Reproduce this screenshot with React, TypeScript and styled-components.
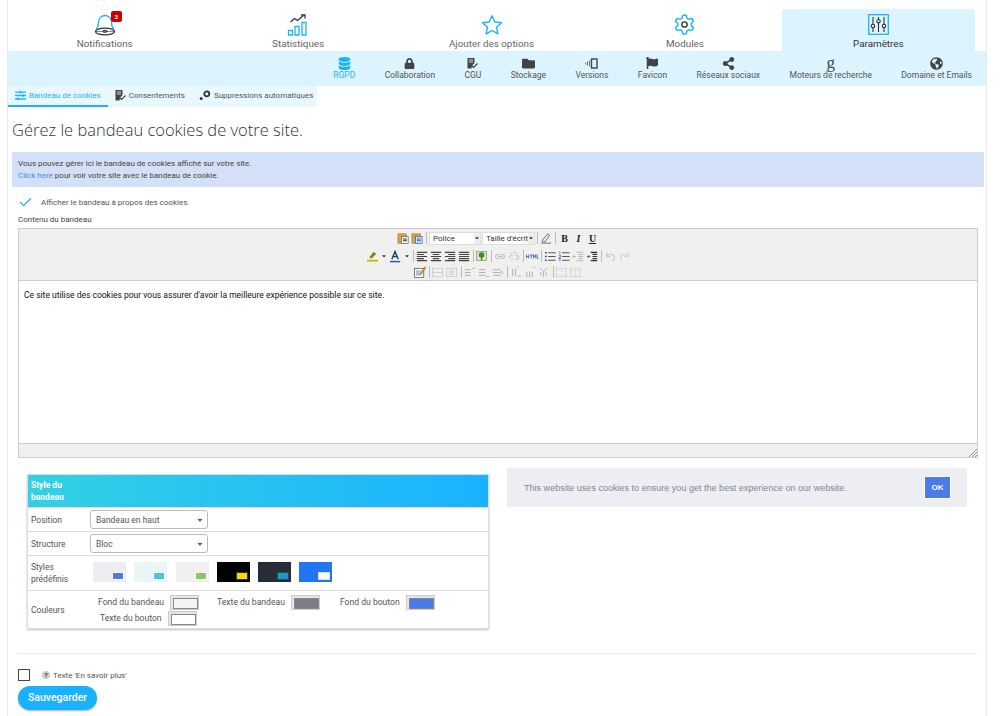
import { FC, ReactNode } from "react";
import styled, { createGlobalStyle } from "styled-components";
import {
	FaDatabase,
	FaLock,
	FaFolder,
	FaFlag,
	FaShareAlt,
	FaGlobeAmericas,
	FaSlidersH,
	FaCaretDown,
	FaQuestion,
} from "react-icons/fa";
import { Check } from "lucide-react";

const BLUE = "#1ab2ff";
const PALE = "#dbf4ff";
const DARK = "#333";

const GlobalStyle = createGlobalStyle`
	html, body {
		margin: 0;
		padding: 0;
		background: #fff;
		font-family: Roboto, "Liberation Sans", sans-serif;
		color: #555;
	}
	* { box-sizing: border-box; }
`;

const GoogleG = styled.span`
	font-family: "Liberation Serif", serif;
	font-size: 17px;
	line-height: 12px;
	color: #444;
`;

/* big nav icons */
const BellIcon = () => (
	<svg width="24" height="24" viewBox="0 0 24 24" fill="none">
		<path d="M3 16c2-1.500 2.500-3 2.500-7a6.500 6.500 0 0 1 13 0c0 4 .5 5.500 2.500 7" stroke={BLUE} strokeWidth="1.3" />
		<ellipse cx="12" cy="18.500" rx="9.500" ry="3.300" stroke={DARK} strokeWidth="1.300" />
		<ellipse cx="12" cy="18.300" rx="2.500" ry="1" stroke={DARK} strokeWidth="1" />
		<path d="M3 18.500h18" stroke={DARK} strokeWidth=".6" />
	</svg>
);

const StatsIcon = () => (
	<svg width="22" height="24" viewBox="0 0 22 24" fill="none">
		<path d="M3.500 9l4-3.500 3 2 6-5" stroke={DARK} strokeWidth="1.300" />
		<path d="M14 2h4v3.500" stroke={DARK} strokeWidth="1.300" />
		<path d="M1.500 17.500h4v4.500h-4zM8 13.500h4v8.500H8zM15 9.500h4V22h-4z" stroke={BLUE} strokeWidth="1.300" />
	</svg>
);

const StarIcon = () => (
	<svg width="22" height="22" viewBox="0 0 22 22" fill="none">
		<path d="M11 1.800l2.800 6.200 6.700.7-5 4.500 1.400 6.700L11 16.500l-5.900 3.400 1.400-6.700-5-4.500 6.700-.7z" stroke={BLUE} strokeWidth="1.400" strokeLinejoin="round" />
	</svg>
);

const GearIcon = () => (
	<svg width="23" height="23" viewBox="0 0 24 24" fill="none">
		<path
			d="M12.220 2h-.44a2 2 0 0 0-2 2v.18a2 2 0 0 1-1 1.730l-.43.250a2 2 0 0 1-2 0l-.15-.080a2 2 0 0 0-2.730.730l-.22.380a2 2 0 0 0 .730 2.730l.15.100a2 2 0 0 1 1 1.720v.510a2 2 0 0 1-1 1.740l-.15.090a2 2 0 0 0-.730 2.730l.22.380a2 2 0 0 0 2.730.730l.15-.080a2 2 0 0 1 2 0l.43.250a2 2 0 0 1 1 1.730V20a2 2 0 0 0 2 2h.44a2 2 0 0 0 2-2v-.18a2 2 0 0 1 1-1.730l.43-.250a2 2 0 0 1 2 0l.15.080a2 2 0 0 0 2.730-.730l.22-.390a2 2 0 0 0-.730-2.730l-.15-.080a2 2 0 0 1-1-1.740v-.500a2 2 0 0 1 1-1.740l.15-.090a2 2 0 0 0 .730-2.730l-.22-.380a2 2 0 0 0-2.730-.730l-.15.080a2 2 0 0 1-2 0l-.43-.250a2 2 0 0 1-1-1.730V4a2 2 0 0 0-2-2z"
			stroke={BLUE}
			strokeWidth="1.500"
		/>
		<circle cx="12" cy="12" r="2.800" stroke={DARK} strokeWidth="1.400" />
	</svg>
);

const ParamsIcon = () => (
	<svg width="21" height="21" viewBox="0 0 21 21" fill="none">
		<rect x=".7" y=".7" width="19.600" height="19.600" stroke={BLUE} strokeWidth="1.300" />
		<g stroke={DARK} strokeWidth="1.100">
			<path d="M5 3v7.500M5 14v4M10.500 3v2.500M10.500 9v9M16 3v7.500M16 14v4" />
			<circle cx="5" cy="12" r="1.700" />
			<circle cx="10.500" cy="7.200" r="1.700" />
			<circle cx="16" cy="12" r="1.700" />
		</g>
	</svg>
);

/* small dark icons */
const DocCheckIcon = () => (
	<svg width="11" height="11" viewBox="0 0 11 11">
		<path d="M.5 0h7v5L5 8l-.5 2.500H.5z" fill="#444" />
		<path d="M2 2h4M2 4h4" stroke="#fff" strokeWidth=".8" />
		<path d="M5 8l1.500 1.500L10.500 5.500" stroke="#444" strokeWidth="1.200" fill="none" />
	</svg>
);

const VersionsIcon = () => (
	<svg width="13" height="11" viewBox="0 0 13 11" fill="none">
		<rect x="6.500" y="1" width="5.500" height="9" stroke="#444" strokeWidth="1.400" />
		<path d="M4.500 2.500v6M2.500 3.500v4M.7 4.500v2" stroke="#666" strokeWidth=".9" />
	</svg>
);

const GearsIcon = () => (
	<svg width="12" height="11" viewBox="0 0 12 11" fill="none">
		<circle cx="7.800" cy="3.800" r="2.500" stroke="#333" strokeWidth="1.800" />
		<circle cx="2.200" cy="8.500" r="1.500" fill="#333" />
	</svg>
);

/* editor toolbar icons */
type ToolName =
	| "paste" | "pasteWord" | "eraser" | "highlight" | "colorA" | "alignL" | "alignC" | "alignR" | "alignJ"
	| "image" | "link" | "unlink" | "html" | "ul" | "ol" | "outdent" | "indent" | "undo" | "redo"
	| "edit" | "rows" | "cell" | "tr1" | "tr2" | "tr3" | "td1" | "td2" | "td3" | "grid1" | "grid2";

const lines = (d: string, color = "#444", w = 1.1) => <path d={d} stroke={color} strokeWidth={w} fill="none" />;

const toolDrawings: Record<ToolName, ReactNode> = {
	paste: (<><rect x="1" y="2" width="9" height="10" fill="#d9a441" stroke="#8a6a2a" strokeWidth=".6" /><rect x="5" y="5" width="7" height="7.500" fill="#fff" stroke="#555" strokeWidth=".7" />{lines("M6.500 7.500h4M6.500 9.500h4", "#222")}</>),
	pasteWord: (<><rect x="1" y="2" width="9" height="10" fill="#d9a441" stroke="#8a6a2a" strokeWidth=".6" /><rect x="5" y="5" width="7" height="7.500" fill="#cfe0f7" stroke="#2a5fb0" strokeWidth=".7" />{lines("M6.500 7.500h4M6.500 9.500h4", "#2a5fb0")}</>),
	eraser: (<>{lines("M2 9.500L8 2.500c1-.8 2.500.4 2 1.500L5.500 10.500H3zM1 12h11", "#557", .9)}</>),
	highlight: (<><path d="M4 7.500L8 2l3 2-4.500 5H4z" fill="#6b8e23" /><path d="M1 11.500h12" stroke="#d8b400" strokeWidth="2" /></>),
	colorA: (<><path d="M3 10L6.500 1.500 10 10M4.500 7h4" stroke="#1f3a6e" strokeWidth="1.400" fill="none" /><path d="M1 12.500h11" stroke="#2a5fb0" strokeWidth="1.600" /></>),
	alignL: lines("M1 2.500h11M1 4.800h7.500M1 7h11M1 9.300h7.500M1 11.500h11", "#444", 1.200),
	alignC: lines("M1 2.500h11M3 4.800h7M1 7h11M3 9.300h7M1 11.500h11", "#444", 1.200),
	alignR: lines("M1 2.500h11M4.500 4.800h7.500M1 7h11M4.500 9.300h7.500M1 11.500h11", "#444", 1.200),
	alignJ: lines("M1 2.500h11M1 4.800h11M1 7h11M1 9.300h11M1 11.500h11", "#444", 1.200),
	image: (<><rect x=".5" y="1.500" width="11" height="10" fill="#d5e8c0" stroke="#777" strokeWidth=".6" /><circle cx="6" cy="5.500" r="3" fill="#3d8a2e" /><rect x="5.300" y="7.500" width="1.400" height="3.500" fill="#8a5a2a" /></>),
	link: lines("M1.500 7a2 2 0 0 1 2-2h2.500M6 9H3.500a2 2 0 0 1-2-2M7 5h2.500a2 2 0 0 1 0 4H7M4.500 7h5", "#7a8a9a", 1),
	unlink: lines("M1.500 8a2 2 0 0 1 2-2h1.500M5 10H3.500M8 6h1.500a2 2 0 0 1 0 4H8M6.500 2v2M3 3l1.500 1.500M10 3L8.500 4.500", "#7a8a9a", 1),
	html: (<path d="M.5 5v4M.5 7h2.500M3 5v4M4.500 5.300h2.500M5.700 5.300V9M8 9V5l1.300 2.500L10.500 5v4M12 5v4h1.500" stroke="#2a5fb0" strokeWidth=".9" fill="none" />),
	ul: (<>{lines("M4.500 3h8M4.500 7h8M4.500 11h8", "#555", 1.200)}{lines("M1 3h2M1 7h2M1 11h2", "#2a5fb0", 1.600)}</>),
	ol: (<>{lines("M4.500 3h8M4.500 7h8M4.500 11h8", "#555", 1.200)}{lines("M2 1.500v3M1 6h2v2H1v1.500h2M1 11h2", "#2a5fb0", .8)}</>),
	outdent: (<>{lines("M5 2.500h7M7 4.800h5M7 7h5M7 9.300h5M5 11.500h7", "#8a8a8a", 1.100)}{lines("M4 7H1M2.500 5.500L1 7l1.500 1.500", "#6a8ab0", 1)}</>),
	indent: (<>{lines("M5 2.500h7M7 4.800h5M7 7h5M7 9.300h5M5 11.500h7", "#333", 1.300)}{lines("M1 7h3M2.500 5.500L4 7l-1.500 1.500", "#2a5fb0", 1)}</>),
	undo: lines("M3 3v4h4M3 7c2-3 6-3.500 8 0 .8 1.800 0 3.500-1.500 4.500", "#8aa8d0", 1.200),
	redo: lines("M11 3v4H7M11 7C9 4 5 3.500 3 7c-.8 1.800 0 3.500 1.500 4.500", "#a8bcd8", 1.200),
	edit: (<><rect x=".5" y="2.500" width="10" height="10" fill="#fff" stroke="#555" strokeWidth=".8" />{lines("M2 5.500h5M2 7.500h4M2 9.500h5", "#2a5fb0", .8)}<path d="M6 8.500L11.500 1 13 2 7.500 9.500z" fill="#d99a2a" stroke="#6a4a1a" strokeWidth=".4" /></>),
	rows: (<><rect x=".5" y="2.500" width="11" height="9" fill="#eef2f7" stroke="#9aa" strokeWidth=".8" />{lines("M.5 7h11", "#9aa", .8)}</>),
	cell: (<><rect x=".5" y="2.500" width="11" height="9" fill="#eef2f7" stroke="#9aa" strokeWidth=".8" /><rect x="4" y="5" width="4" height="4" fill="#cfd8e8" stroke="#9aa" strokeWidth=".5" /></>),
	tr1: lines("M1 4h6M1 7h6M1 10h6M9 2.500h3", "#aab", 1),
	tr2: lines("M1 4h7M1 7h7M1 10h7M9 11.500h3", "#aab", 1),
	tr3: (<>{lines("M1 4h8M1 7h8M1 10h8", "#aab", 1)}{lines("M9 5l3 2-3 2", "#d9a0a0", 1)}</>),
	td1: lines("M3 3v8M6 3v8M9 11h3M7 1h2", "#aab", 1),
	td2: lines("M3 6v6M6 6v6M9 6v6M10 1.500h2", "#aab", 1),
	td3: lines("M2 2l4 4M10 2L6 6M6 6v6M3 7v3M9 7v3", "#aab", 1),
	grid1: (<><rect x=".5" y="2.500" width="11" height="9" fill="#dfe6ef" stroke="#aab" strokeWidth=".7" />{lines("M4 2.500v9M8 2.500v9M.5 7h11", "#fff", .8)}</>),
	grid2: (<><rect x=".5" y="2.500" width="11" height="9" fill="#eef2f7" stroke="#aab" strokeWidth=".7" />{lines("M.5 5h11M6 5v6.500", "#bcc", .8)}</>),
};

const ToolIcon: FC<{ name: ToolName; faded?: boolean }> = ({ name, faded }) => (
	<ToolSvg viewBox="0 0 14 14" $faded={faded}>{toolDrawings[name]}</ToolSvg>
);

const topTabs = [
	{ label: "Notifications", icon: <BellIcon />, badge: "3" },
	{ label: "Statistiques", icon: <StatsIcon /> },
	{ label: "Ajouter des options", icon: <StarIcon /> },
	{ label: "Modules", icon: <GearIcon /> },
	{ label: "Paramètres", icon: <ParamsIcon />, active: true },
];

const subTabs: { label: string; icon: ReactNode; active?: boolean }[] = [
	{ label: "RGPD", icon: <FaDatabase size={13} color={BLUE} />, active: true },
	{ label: "Collaboration", icon: <FaLock size={11} color="#444" /> },
	{ label: "CGU", icon: <DocCheckIcon /> },
	{ label: "Stockage", icon: <FaFolder size={13} color="#444" /> },
	{ label: "Versions", icon: <VersionsIcon /> },
	{ label: "Favicon", icon: <FaFlag size={12} color="#444" /> },
	{ label: "Réseaux sociaux", icon: <FaShareAlt size={13} color="#444" /> },
	{ label: "Moteurs de recherche", icon: <GoogleG>g</GoogleG> },
	{ label: "Domaine et Emails", icon: <FaGlobeAmericas size={13} color="#444" /> },
];

const presets = [
	{ bg: "#edeef4", btn: "#4a7ce8", edge: "#fff" },
	{ bg: "#e8f6f6", btn: "#4fc6d8", edge: "#fff" },
	{ bg: "#f0f0f0", btn: "#8cc660", edge: "#fff" },
	{ bg: "#000", btn: "#f5d800", edge: "#333" },
	{ bg: "#252d38", btn: "#149cc8", edge: "#3a4450" },
	{ bg: "#2176f5", btn: "#fff", edge: "#cfe0ff" },
];

const App: FC = () => (
	<>
		<GlobalStyle />
		<Page>
			<TopNav>
				{topTabs.map((t) => (
					<TopTab key={t.label} $active={t.active}>
						<TopIcon>
							{t.icon}
							{t.badge && <Badge>{t.badge}</Badge>}
						</TopIcon>
						{t.label}
					</TopTab>
				))}
			</TopNav>

			<SubNav>
				{subTabs.map((t) => (
					<SubTab key={t.label} $active={t.active}>
						<SubIcon>{t.icon}</SubIcon>
						{t.label}
					</SubTab>
				))}
			</SubNav>

			<ThirdNav>
				<ThirdTab $active>
					<FaSlidersH size={11} color={BLUE} />
					Bandeau de cookies
				</ThirdTab>
				<ThirdTab>
					<DocCheckIcon />
					Consentements
				</ThirdTab>
				<ThirdTab>
					<GearsIcon />
					Suppressions automatiques
				</ThirdTab>
			</ThirdNav>

			<Title>Gérez le bandeau cookies de votre site.</Title>

			<InfoBox>
				Vous pouvez gérer ici le bandeau de cookies affiché sur votre site.
				<br />
				<InfoLink>Click here</InfoLink> pour voir votre site avec le bandeau de cookie.
			</InfoBox>

			<Content>
				<CheckRow>
					<Check size={15} color={BLUE} strokeWidth={2} />
					Afficher le bandeau à propos des cookies.
				</CheckRow>
				<FieldLabel>Contenu du bandeau</FieldLabel>

				<Editor>
					<Toolbar>
						<ToolRow>
							<ToolIcon name="paste" />
							<ToolIcon name="pasteWord" />
							<ToolSep />
							<ToolSelect $width={52}>Police<SelectArrow><FaCaretDown size={6} /></SelectArrow></ToolSelect>
							<ToolSelect $width={53}>Taille d'écritu<SelectArrow><FaCaretDown size={6} /></SelectArrow></ToolSelect>
							<ToolSep />
							<ToolIcon name="eraser" />
							<ToolSep />
							<FormatLetter>B</FormatLetter>
							<FormatLetter $italic>I</FormatLetter>
							<FormatLetter $underline>U</FormatLetter>
						</ToolRow>
						<ToolRow>
							<ToolIcon name="highlight" />
							<MiniArrow><FaCaretDown size={6} /></MiniArrow>
							<ToolIcon name="colorA" />
							<MiniArrow><FaCaretDown size={6} /></MiniArrow>
							<ToolSep />
							<ToolIcon name="alignL" />
							<ToolIcon name="alignC" />
							<ToolIcon name="alignR" />
							<ToolIcon name="alignJ" />
							<ToolSep />
							<ToolIcon name="image" />
							<ToolSep />
							<ToolIcon name="link" faded />
							<ToolIcon name="unlink" faded />
							<ToolSep />
							<ToolIcon name="html" />
							<ToolSep />
							<ToolIcon name="ul" />
							<ToolIcon name="ol" />
							<ToolIcon name="outdent" faded />
							<ToolIcon name="indent" />
							<ToolSep />
							<ToolIcon name="undo" faded />
							<ToolIcon name="redo" faded />
						</ToolRow>
						<ToolRow>
							<ToolIcon name="edit" />
							<ToolSep />
							<ToolIcon name="rows" faded />
							<ToolIcon name="cell" faded />
							<ToolSep />
							<ToolIcon name="tr1" />
							<ToolIcon name="tr2" />
							<ToolIcon name="tr3" />
							<ToolSep />
							<ToolIcon name="td1" />
							<ToolIcon name="td2" />
							<ToolIcon name="td3" />
							<ToolSep />
							<ToolIcon name="grid1" faded />
							<ToolIcon name="grid2" faded />
						</ToolRow>
					</Toolbar>
					<EditorBody>
						Ce site utilise des cookies pour vous assurer d'avoir la meilleure expérience possible sur ce site.
					</EditorBody>
					<EditorFooter>
						<Resize width="9" height="9" viewBox="0 0 9 9">
							<path d="M1 9l8-8M4 9l5-5M7 9l2-2" stroke="#777" strokeWidth=".8" />
						</Resize>
					</EditorFooter>
				</Editor>

				<StyleSection>
					<StylePanel>
						<PanelHead>Style du<br />bandeau</PanelHead>
						<PanelRow $height={24}>
							<RowLabel>Position</RowLabel>
							<FakeSelect>Bandeau en haut<FaCaretDown size={8} /></FakeSelect>
						</PanelRow>
						<PanelRow $height={24}>
							<RowLabel>Structure</RowLabel>
							<FakeSelect>Bloc<FaCaretDown size={8} /></FakeSelect>
						</PanelRow>
						<PanelRow $height={35}>
							<RowLabel>Styles prédéfinis</RowLabel>
							<Presets>
								{presets.map((p) => (
									<Preset key={p.bg} $bg={p.bg}>
										<PresetButton $bg={p.btn} $edge={p.edge} />
									</Preset>
								))}
							</Presets>
						</PanelRow>
						<PanelRow $height={39} $last>
							<RowLabel>Couleurs</RowLabel>
							<ColorGrid>
								<ColorItem>Fond du bandeau<Swatch $color="#f4f4f6" /></ColorItem>
								<ColorItem>Texte du bandeau<Swatch $color="#7d7d88" /></ColorItem>
								<ColorItem>Fond du bouton<Swatch $color="#4a7ce8" /></ColorItem>
								<ColorItem>Texte du bouton<Swatch $color="#fff" /></ColorItem>
							</ColorGrid>
						</PanelRow>
					</StylePanel>

					<CookiePreview>
						This website uses cookies to ensure you get the best experience on our website.
						<OkButton>OK</OkButton>
					</CookiePreview>
				</StyleSection>

				<Divider />

				<MoreRow>
					<EmptyBox />
					<HelpDot><FaQuestion size={4} color="#444" /></HelpDot>
					Texte 'En savoir plus'
				</MoreRow>
				<SaveButton>Sauvegarder</SaveButton>
			</Content>
		</Page>
	</>
);

const Page = styled.div`
	width: 980px;
	height: 716px;
	margin-left: 7px;
	padding-top: 9px;
	border-left: 1px solid #eaeaea;
	border-right: 1px solid #eaeaea;
	overflow: hidden;
`;

const TopNav = styled.div`
	display: flex;
	width: 967px;
	height: 42px;
`;

const TopTab = styled.div<{ $active?: boolean }>`
	flex: 1;
	display: flex;
	flex-direction: column;
	align-items: center;
	padding-top: 2px;
	border-radius: 3px 3px 0 0;
	background: ${(p) => (p.$active ? PALE : "transparent")};
	color: ${(p) => (p.$active ? "#333" : "#666")};
	font-size: 9.85px;
	line-height: 12px;
`;

const TopIcon = styled.div`
	position: relative;
	height: 27px;
	display: flex;
	align-items: center;
	justify-content: center;
`;

const Badge = styled.span`
	position: absolute;
	top: 0;
	left: 18px;
	width: 11px;
	height: 11px;
	border-radius: 2px;
	background: #cc0000;
	color: #fff;
	font-size: 6px;
	font-weight: 700;
	line-height: 11px;
	text-align: center;
`;

const SubNav = styled.div`
	display: flex;
	justify-content: flex-end;
	height: 35px;
	padding: 5px 14px 0 0;
	gap: 29.4px;
	background: ${PALE};
`;

const SubTab = styled.div<{ $active?: boolean }>`
	display: flex;
	flex-direction: column;
	align-items: center;
	color: ${(p) => (p.$active ? BLUE : "#555")};
	font-size: 8.5px;
	line-height: 11px;
`;

const SubIcon = styled.div`
	height: 14px;
	display: flex;
	align-items: center;
	justify-content: center;
`;

const ThirdNav = styled.div`
	display: flex;
	width: 309px;
	height: 21px;
	background: #e9f8ff;
`;

const ThirdTab = styled.div<{ $active?: boolean }>`
	display: flex;
	align-items: center;
	gap: 3px;
	padding: 0 7px;
	font-size: 8px;
	white-space: nowrap;
	color: ${(p) => (p.$active ? BLUE : "#555")};
	border-bottom: 2px solid ${(p) => (p.$active ? BLUE : "transparent")};
`;

const Title = styled.h1`
	margin: 13px 0 12px 4px;
	font-family: "Open Sans", sans-serif;
	font-weight: 300;
	font-size: 16.5px;
	line-height: 20px;
	color: #333;
`;

const InfoBox = styled.div`
	width: 972px;
	height: 35px;
	margin-left: 4px;
	padding: 6px 6px;
	background: #d4e0f7;
	border-radius: 2px;
	font-size: 8px;
	line-height: 11.5px;
	color: #444;
`;

const InfoLink = styled.span`
	color: #3a8ef0;
`;

const Content = styled.div`
	padding: 0 9px 0 10px;
`;

const CheckRow = styled.div`
	display: flex;
	align-items: center;
	gap: 8px;
	height: 14px;
	margin-top: 8px;
	font-size: 8px;
	color: #555;
`;

const FieldLabel = styled.div`
	margin-top: 5px;
	font-size: 8px;
	line-height: 12px;
	color: #444;
`;

const Editor = styled.div`
	width: 960px;
	height: 230px;
	margin-top: 2px;
	display: flex;
	flex-direction: column;
	border: 1px solid #ccc;
`;

const Toolbar = styled.div`
	height: 52px;
	padding-top: 1px;
	background: #f0f0ee;
	border-bottom: 1px solid #ccc;
`;

const ToolRow = styled.div`
	display: flex;
	justify-content: center;
	align-items: center;
	gap: 1px;
	height: 16px;

	&:nth-child(2) { margin-top: 2px; }
`;

const ToolSvg = styled.svg<{ $faded?: boolean }>`
	width: 13px;
	height: 13px;
	opacity: ${(p) => (p.$faded ? 0.55 : 1)};
`;

const ToolSep = styled.span`
	width: 1px;
	height: 12px;
	margin: 0 1px;
	background: #bbb;
`;

const ToolSelect = styled.div<{ $width: number }>`
	position: relative;
	width: ${(p) => p.$width}px;
	height: 13px;
	padding-left: 3px;
	background: #fff;
	border: 1px solid #ddd;
	font-size: 8px;
	line-height: 11px;
	color: #333;
	white-space: nowrap;
	overflow: hidden;
`;

const SelectArrow = styled.span`
	position: absolute;
	top: 0;
	right: 0;
	width: 6px;
	height: 11px;
	display: flex;
	align-items: center;
	justify-content: center;
	background: #eee;
`;

const MiniArrow = styled.span`
	display: flex;
	margin: 0 1px;
	color: #333;
`;

const FormatLetter = styled.span<{ $italic?: boolean; $underline?: boolean }>`
	width: 13px;
	text-align: center;
	font-family: "Liberation Serif", serif;
	font-weight: 700;
	font-size: 10px;
	color: #222;
	font-style: ${(p) => (p.$italic ? "italic" : "normal")};
	text-decoration: ${(p) => (p.$underline ? "underline" : "none")};
`;

const EditorBody = styled.div`
	flex: 1;
	padding: 8px 5px;
	background: #fff;
	font-size: 8.5px;
	line-height: 12px;
	color: #111;
`;

const EditorFooter = styled.div`
	position: relative;
	height: 14px;
	background: #f0f0ee;
	border-top: 1px solid #ccc;
`;

const Resize = styled.svg`
	position: absolute;
	right: 0;
	bottom: 0;
`;

const StyleSection = styled.div`
	display: flex;
	align-items: flex-start;
	margin-top: 10px;
`;

const StylePanel = styled.div`
	width: 462px;
	height: 155px;
	margin: 6px 18px 0 9px;
	border: 1px solid #ddd;
	box-shadow: 0 1px 2px rgba(0, 0, 0, 0.25);
`;

const PanelHead = styled.div`
	height: 32px;
	padding: 4px 3px;
	background: linear-gradient(90deg, #33d0e4, #1ab2ff);
	color: #fff;
	font-size: 8.5px;
	font-weight: 700;
	line-height: 12px;
`;

const PanelRow = styled.div<{ $height: number; $last?: boolean }>`
	display: flex;
	align-items: center;
	height: ${(p) => p.$height}px;
	border-top: 1px solid #ddd;
`;

const RowLabel = styled.div`
	width: 62px;
	padding-left: 3px;
	font-size: 8.5px;
	line-height: 12px;
	color: #555;
`;

const FakeSelect = styled.div`
	display: flex;
	align-items: center;
	justify-content: space-between;
	width: 118px;
	height: 19px;
	padding: 0 3px 0 5px;
	border: 1px solid #bbb;
	border-radius: 3px;
	background: #fff;
	font-size: 8.5px;
	color: #555;
`;

const Presets = styled.div`
	display: flex;
	gap: 8.3px;
	margin-left: 3px;
	padding-bottom: 2px;
`;

const Preset = styled.div<{ $bg: string }>`
	display: flex;
	align-items: flex-end;
	justify-content: flex-end;
	width: 33px;
	height: 20px;
	padding: 0 3px 3px 0;
	background: ${(p) => p.$bg};
`;

const PresetButton = styled.div<{ $bg: string; $edge: string }>`
	width: 10px;
	height: 6px;
	background: ${(p) => p.$bg};
	outline: 1px solid ${(p) => p.$edge};
`;

const ColorGrid = styled.div`
	display: flex;
	flex-wrap: wrap;
	row-gap: 1px;
	width: 360px;
	padding-left: 8px;

	& > div:nth-child(2) { margin-left: 18px; }
	& > div:nth-child(3) { margin-left: 20px; }
	& > div:nth-child(4) { margin-left: 2px; }
`;

const ColorItem = styled.div`
	display: flex;
	align-items: center;
	gap: 6px;
	height: 15px;
	font-size: 8.6px;
	color: #555;
	white-space: nowrap;
`;

const Swatch = styled.span<{ $color: string }>`
	display: block;
	width: 29px;
	height: 15px;
	padding: 2px;
	background: #e6e6e6;
	border: 1px solid #ccc;

	&::after {
		content: "";
		display: block;
		width: 100%;
		height: 100%;
		background: ${(p) => p.$color};
		border: 1px solid #888;
	}
`;

const CookiePreview = styled.div`
	display: flex;
	align-items: center;
	justify-content: space-between;
	width: 460px;
	height: 39px;
	padding: 0 16px 0 17px;
	background: #edeef4;
	font-family: "Liberation Sans", sans-serif;
	font-size: 9.05px;
	color: #85858f;
`;

const OkButton = styled.div`
	width: 27px;
	height: 23px;
	background: #4a7ce8;
	border: 1px solid #fff;
	color: #fff;
	font-size: 8px;
	font-weight: 700;
	line-height: 21px;
	text-align: center;
`;

const Divider = styled.div`
	width: 959px;
	height: 1px;
	margin-top: 24px;
	background: #e8e8e8;
`;

const MoreRow = styled.div`
	display: flex;
	align-items: center;
	height: 12px;
	margin-top: 15px;
	font-size: 8px;
	color: #555;
`;

const EmptyBox = styled.span`
	width: 12px;
	height: 12px;
	margin-right: 12px;
	background: #fff;
	border: 1px solid #444;
`;

const HelpDot = styled.span`
	display: flex;
	align-items: center;
	justify-content: center;
	width: 8px;
	height: 8px;
	margin-right: 3px;
	border-radius: 50%;
	background: #ccc;
`;

const SaveButton = styled.div`
	width: 79px;
	height: 24px;
	margin-top: 5px;
	border-radius: 12px;
	background: ${BLUE};
	box-shadow: 0 1px 2px rgba(0, 0, 0, 0.3);
	color: #fff;
	font-size: 10.5px;
	font-weight: 500;
	line-height: 24px;
	text-align: center;
`;

export default App;
